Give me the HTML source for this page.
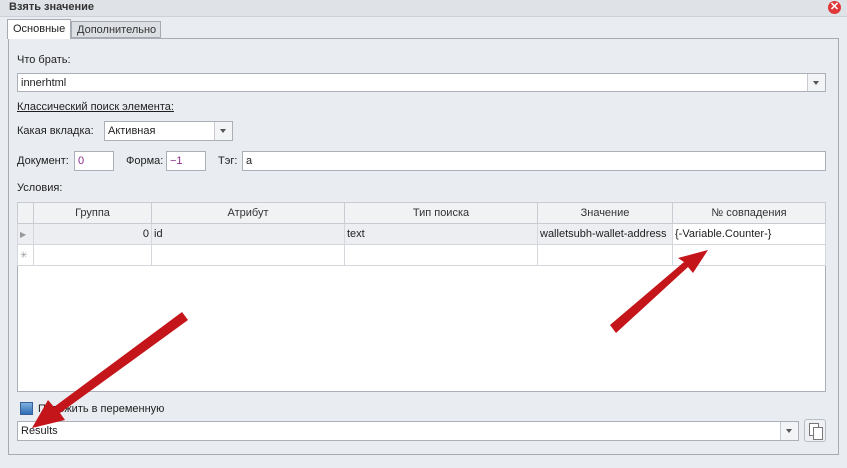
<!DOCTYPE html><html><head><meta charset="utf-8"><style>
body{margin:0;width:847px;height:468px;overflow:hidden;background:#e9ecf1;font-family:"Liberation Sans",sans-serif;font-size:11px;color:#1e1e1e;position:relative}
.a{position:absolute}
.box{position:absolute;background:#fff;border:1px solid #abb0b8;box-sizing:border-box;padding:2px 3px;line-height:14px}
.dd{position:absolute;top:0;right:0;width:17px;height:100%;border-left:1px solid #c8ccd2;background:#f3f4f6}
.dd:after{content:"";position:absolute;left:5px;top:7px;border:3px solid transparent;border-top:4px solid #555}
table{border-collapse:collapse;position:absolute;left:17px;top:202px;width:808px;font-size:11px;table-layout:fixed}
td{border:1px solid #d4d7dc;height:21px;padding:0 2px;box-sizing:border-box;line-height:19px;overflow:hidden;white-space:nowrap}
th{font-weight:normal;border:1px solid #c8ccd2;height:21px;padding:0;background:#f1f2f4;color:#333;box-sizing:border-box;line-height:19px}
tr{height:21px}
</style></head><body>
<div class="a" style="left:0;top:0;width:847px;height:16px;background:#dfe2e7;border-bottom:1px solid #cdd1d7"></div>
<div class="a" style="left:9px;top:1px;font-weight:bold;color:#333;font-size:11px">Взять значение</div>
<div class="a" style="left:828px;top:1px;width:13px;height:13px;border-radius:50%;background:#e0383a;color:#fff;font-size:11px;line-height:13px;text-align:center;font-weight:bold">✕</div>
<div class="a" style="left:8px;top:38px;width:831px;height:417px;border:1px solid #a7abb3;box-sizing:border-box"></div>
<div class="a" style="left:71px;top:21px;width:90px;height:17px;border:1px solid #a7abb3;background:#dcdfe4;box-sizing:border-box;padding:2px 5px;color:#333">Дополнительно</div>
<div class="a" style="left:7px;top:19px;width:64px;height:20px;border:1px solid #a7abb3;border-bottom:none;background:#fff;box-sizing:border-box;padding:3px 5px">Основные</div>
<div class="a" style="left:17px;top:54px">Что брать:</div>
<div class="box" style="left:17px;top:73px;width:809px;height:19px">innerhtml<div class="dd"></div></div>
<div class="a" style="left:17px;top:101px;text-decoration:underline">Классический поиск элемента:</div>
<div class="a" style="left:17px;top:125px">Какая вкладка:</div>
<div class="box" style="left:104px;top:121px;width:129px;height:20px">Активная<div class="dd"></div></div>
<div class="a" style="left:17px;top:155px">Документ:</div>
<div class="box" style="left:74px;top:151px;width:40px;height:20px;color:#8a2b8a">0</div>
<div class="a" style="left:126px;top:155px">Форма:</div>
<div class="box" style="left:166px;top:151px;width:40px;height:20px;color:#8a2b8a">−1</div>
<div class="a" style="left:218px;top:155px">Тэг:</div>
<div class="box" style="left:242px;top:151px;width:584px;height:20px">a</div>
<div class="a" style="left:17px;top:182px">Условия:</div>
<div class="a" style="left:17px;top:202px;width:809px;height:190px;background:#fff;border:1px solid #abb0b8;box-sizing:border-box"></div>
<table><colgroup><col style="width:16px"><col style="width:118px"><col style="width:193px"><col style="width:193px"><col style="width:135px"><col style="width:153px"></colgroup>
<tr><th></th><th>Группа</th><th>Атрибут</th><th>Тип поиска</th><th>Значение</th><th>№ совпадения</th></tr>
<tr style="background:#eceef1"><td style="color:#999;font-size:8px">▶</td><td style="text-align:right">0</td><td>id</td><td>text</td><td>walletsubh-wallet-address</td><td style="background:#fff">{-Variable.Counter-}</td></tr>
<tr><td style="color:#999;font-size:9px">✳</td><td></td><td></td><td></td><td></td><td></td></tr></table>
<div class="a" style="left:20px;top:402px;width:13px;height:13px;background:linear-gradient(#7fb0e0,#2f6db5);border:1px solid #35619a;box-sizing:border-box"></div>
<div class="a" style="left:38px;top:403px">Положить в переменную</div>
<div class="box" style="left:17px;top:421px;width:782px;height:20px">Results<div class="dd"></div></div>
<div class="a" style="left:804px;top:419px;width:22px;height:23px;border:1px solid #b9bdc4;border-radius:3px;background:#eef0f3;box-sizing:border-box"></div>
<div class="a" style="left:809px;top:423px;width:8px;height:11px;border:1px solid #777;background:#fff"></div>
<div class="a" style="left:813px;top:427px;width:8px;height:11px;border:1px solid #777;background:#fff"></div>
<svg class="a" style="left:0;top:0" width="847" height="468"><g fill="#c4151a"><polygon points="182,312 188,320 60,413 65,420 32,428 48,400 54,407"/><polygon points="610,325 616,333 688,267 693,273 708,250 678,258 684,262"/></g></svg>
</body></html>
